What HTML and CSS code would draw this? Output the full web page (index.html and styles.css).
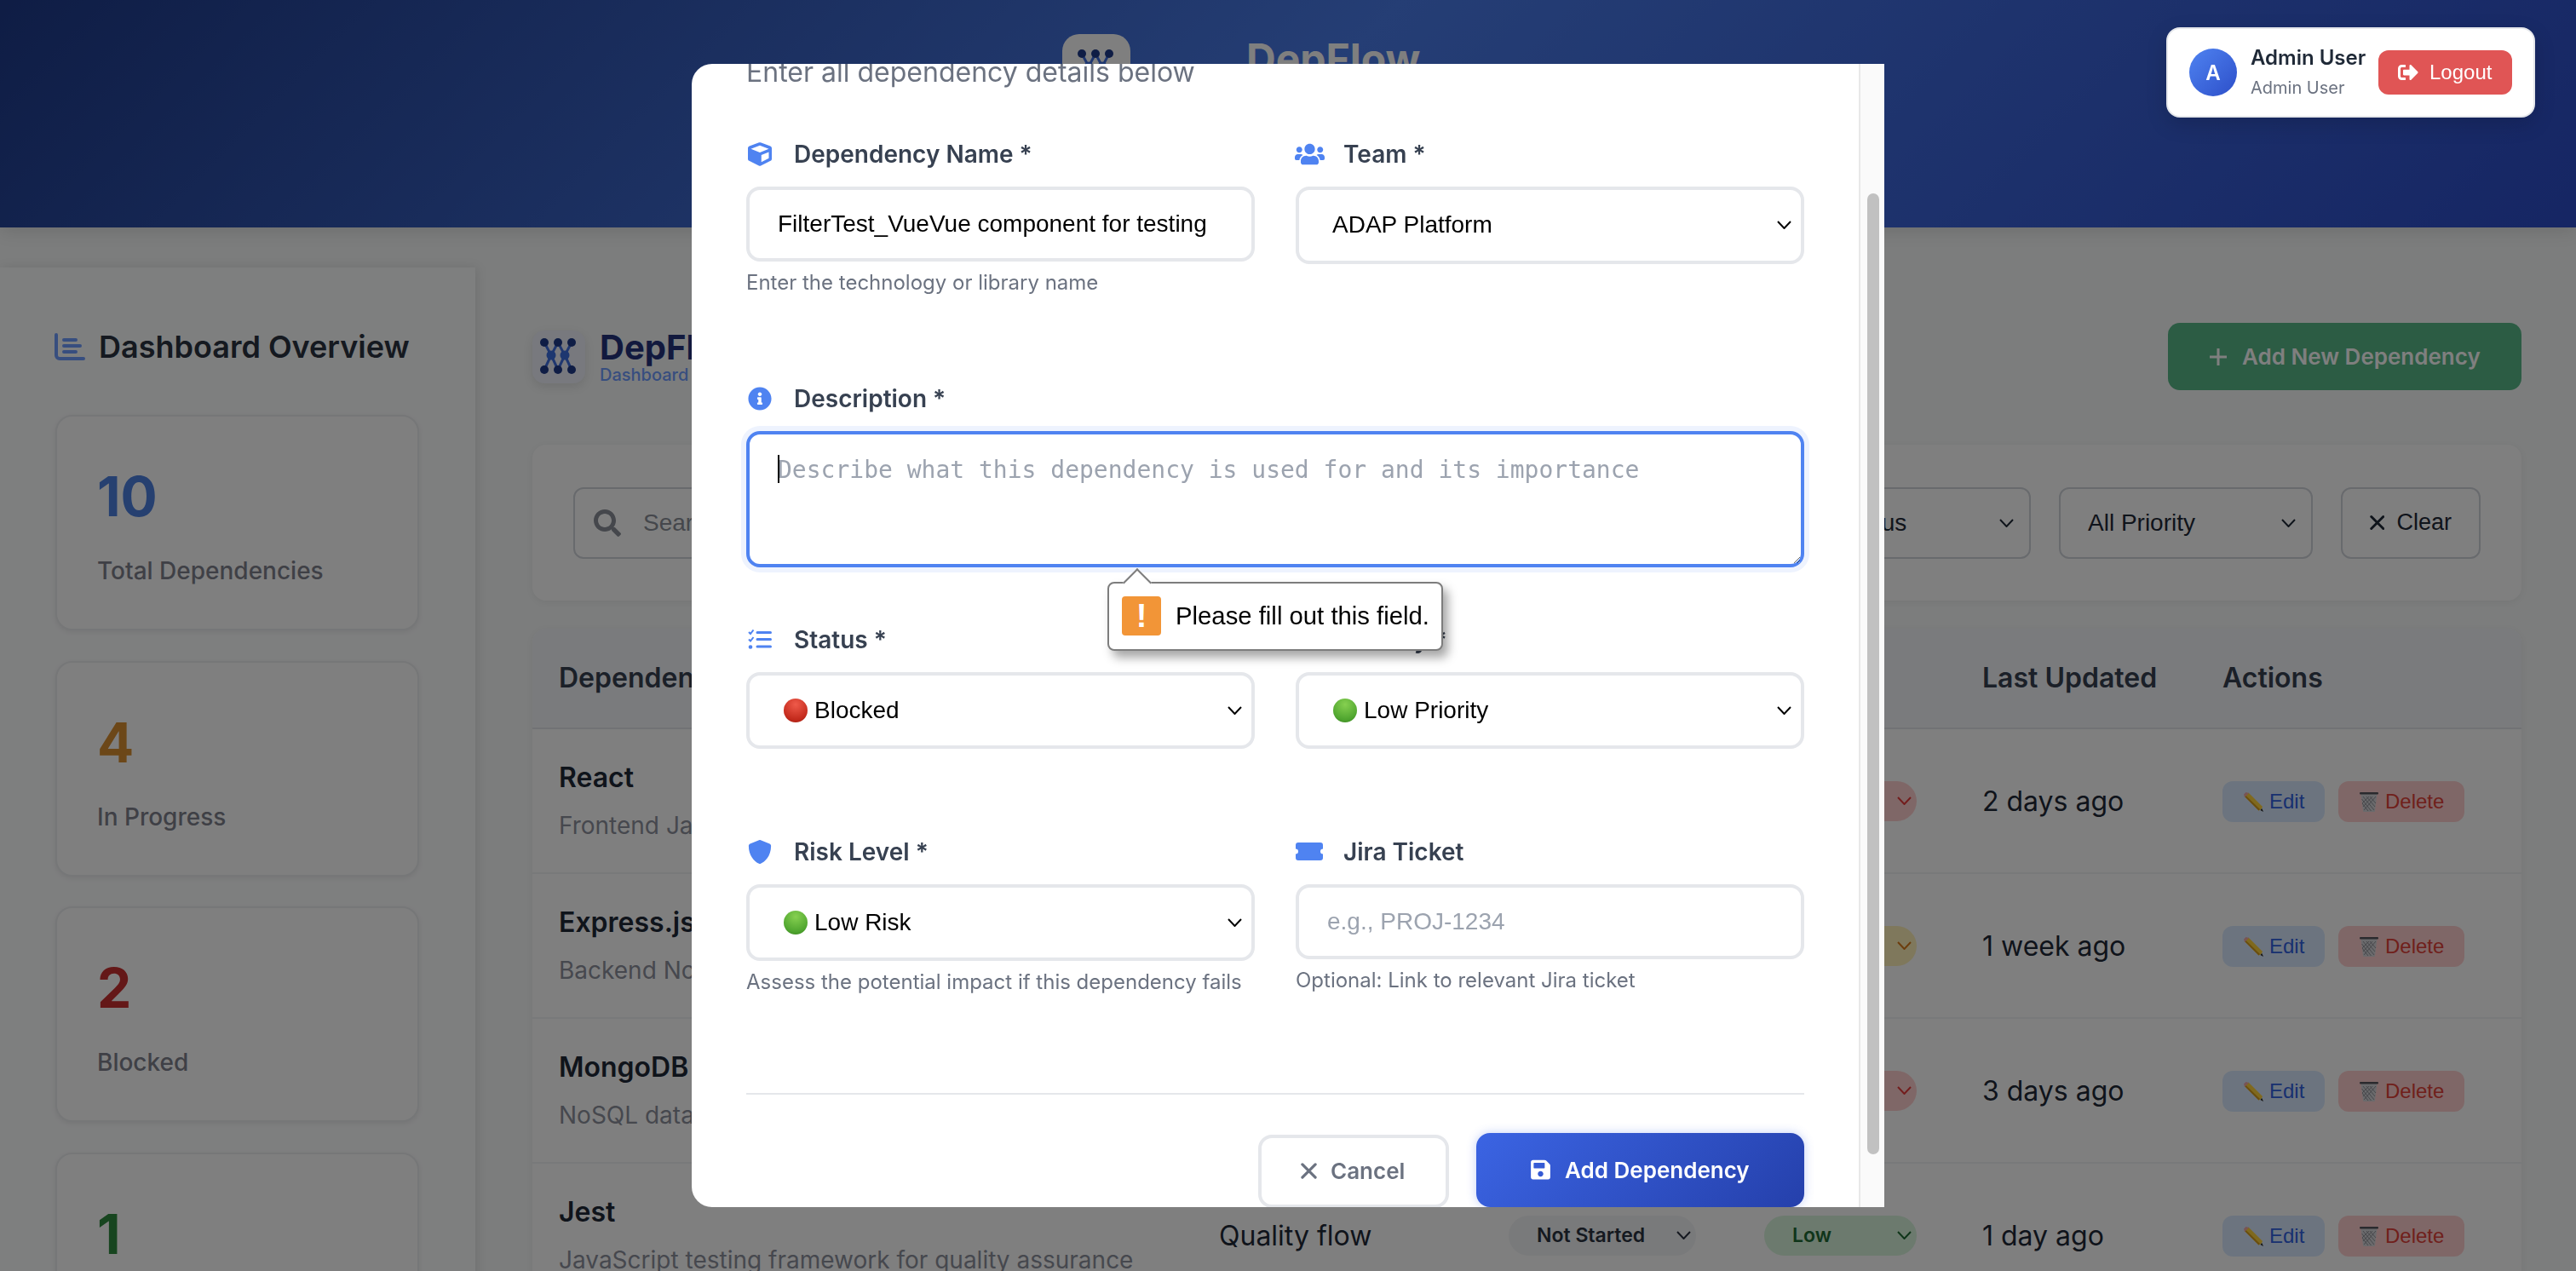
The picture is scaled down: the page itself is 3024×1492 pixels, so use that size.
FILE: index.html
```html
<!DOCTYPE html>
<html lang="en">
<head>
  <meta charset="UTF-8">
  <meta name="viewport" content="width=device-width, initial-scale=1.0">
  <title>DepFlow</title>
  <link rel="stylesheet" href="styles.css">
</head>
<body>
  <svg class="sprite" aria-hidden="true">
    <symbol id="i-logo" viewBox="0 0 60 60">
      <g class="logo-lines">
        <path d="M13 13L21 28L13 45M29 13L21 28L29 45M29 13L37 28L29 45M45 13L37 28L45 45"/>
      </g>
      <circle class="logo-dark" cx="13" cy="13" r="5"/><circle class="logo-dark" cx="29" cy="13" r="5"/><circle class="logo-dark" cx="45" cy="13" r="5"/>
      <circle class="logo-mid" cx="21" cy="28" r="5.5"/><circle class="logo-mid" cx="37" cy="28" r="5.5"/>
      <circle class="logo-dark" cx="13" cy="45" r="5"/><circle class="logo-dark" cx="29" cy="45" r="5"/><circle class="logo-dark" cx="45" cy="45" r="5"/>
    </symbol>
    <symbol id="i-chevron" viewBox="0 0 17 10"><path d="M1 1l7.5 8L16 1" fill="none" stroke="currentColor" stroke-width="2"/></symbol>
    <symbol id="i-x" viewBox="0 0 20 20"><path d="M2 2l16 16M18 2L2 18" fill="none" stroke="currentColor" stroke-width="3.4" stroke-linecap="round"/></symbol>
    <symbol id="i-plus" viewBox="0 0 22 22"><path d="M11 1v20M1 11h20" fill="none" stroke="currentColor" stroke-width="3"/></symbol>
    <symbol id="i-chart" viewBox="0 0 36 32"><path fill="currentColor" d="M0 2a2 2 0 0 1 4 0v24a2 2 0 0 0 2 2h28a2 2 0 0 1 0 4H6a6 6 0 0 1-6-6zM11 6h14a2 2 0 0 1 0 4H11a2 2 0 0 1 0-4zM11 13h19a2 2 0 0 1 0 4H11a2 2 0 0 1 0-4zM11 20h14a2 2 0 0 1 0 4H11a2 2 0 0 1 0-4z"/></symbol>
    <symbol id="i-search" viewBox="0 0 512 512"><path fill="currentColor" d="M505 442.7L405.3 343c-4.5-4.5-10.6-7-17-7H372c27.6-35.3 44-79.7 44-128C416 93.1 322.9 0 208 0S0 93.1 0 208s93.1 208 208 208c48.3 0 92.7-16.4 128-44v16.3c0 6.4 2.5 12.5 7 17l99.7 99.7c9.4 9.4 24.6 9.4 33.9 0l28.3-28.3c9.4-9.4 9.4-24.6.1-34zM208 336c-70.7 0-128-57.2-128-128 0-70.7 57.2-128 128-128 70.7 0 128 57.2 128 128 0 70.7-57.2 128-128 128z"/></symbol>
    <symbol id="i-logout" viewBox="0 0 512 512"><path fill="currentColor" d="M497 273L329 441c-15 15-41 4.5-41-17v-96H152c-13.3 0-24-10.7-24-24v-96c0-13.3 10.7-24 24-24h136V88c0-21.4 25.9-32 41-17l168 168c9.3 9.4 9.3 24.6 0 34zM192 436v-40c0-6.6-5.4-12-12-12H96c-17.7 0-32-14.3-32-32V160c0-17.7 14.3-32 32-32h84c6.6 0 12-5.4 12-12V76c0-6.6-5.4-12-12-12H96c-53 0-96 43-96 96v192c0 53 43 96 96 96h84c6.6 0 12-5.4 12-12z"/></symbol>
    <symbol id="i-cube" viewBox="0 0 512 512"><path fill="currentColor" d="M239.1 6.3l-208 78c-18.7 7-31.1 25-31.1 45v225.1c0 18.2 10.3 34.8 26.5 42.9l208 104c13.5 6.8 29.4 6.8 42.9 0l208-104c16.3-8.1 26.5-24.8 26.5-42.9V129.3c0-20-12.4-37.9-31.1-44.9l-208-78C262 2.2 250 2.2 239.1 6.3zM256 68.4l192 72v1.1l-192 78-192-78v-1.1l192-72zm32 356V275.5l160-65v133.9l-160 80z"/></symbol>
    <symbol id="i-users" viewBox="0 0 640 512"><path fill="currentColor" d="M96 224c35.3 0 64-28.7 64-64s-28.7-64-64-64-64 28.7-64 64 28.7 64 64 64zm448 0c35.3 0 64-28.7 64-64s-28.7-64-64-64-64 28.7-64 64 28.7 64 64 64zm32 32h-64c-17.6 0-33.5 7.1-45.1 18.6 40.3 22.1 68.9 62 75.1 109.4h66c17.7 0 32-14.3 32-32v-32c0-35.3-28.7-64-64-64zm-256 0c61.9 0 112-50.1 112-112S381.9 32 320 32 208 82.1 208 144s50.1 112 112 112zm76.8 32h-8.3c-20.8 10-43.9 16-68.5 16s-47.6-6-68.5-16h-8.3C179.6 288 128 339.6 128 403.2V432c0 26.5 21.5 48 48 48h288c26.5 0 48-21.5 48-48v-28.8c0-63.6-51.6-115.2-115.2-115.2zm-223.7-13.4C161.5 263.1 145.6 256 128 256H64c-35.3 0-64 28.7-64 64v32c0 17.7 14.3 32 32 32h65.9c6.3-47.4 34.9-87.3 75.2-109.4z"/></symbol>
    <symbol id="i-info" viewBox="0 0 512 512"><path fill="currentColor" d="M256 8C119 8 8 119.1 8 256c0 137 111 248 248 248s248-111 248-248C504 119.1 393 8 256 8zm0 110c23.2 0 42 18.8 42 42s-18.8 42-42 42-42-18.8-42-42 18.8-42 42-42zm56 254c0 6.6-5.4 12-12 12h-88c-6.6 0-12-5.4-12-12v-24c0-6.6 5.4-12 12-12h12v-64h-12c-6.6 0-12-5.4-12-12v-24c0-6.6 5.4-12 12-12h64c6.6 0 12 5.4 12 12v100h12c6.6 0 12 5.4 12 12v24z"/></symbol>
    <symbol id="i-tasks" viewBox="0 0 28 23"><path fill="none" stroke="currentColor" stroke-width="2" d="M1 3l2 2 3.5-4.5M1 11.5l2 2 3.5-4.5"/><circle cx="3" cy="20.5" r="2.3" fill="currentColor"/><path fill="none" stroke="currentColor" stroke-width="3" stroke-linecap="round" d="M11 3.5h15.5M11 11.5h15.5M11 20h15.5"/></symbol>
    <symbol id="i-shield" viewBox="0 0 512 512"><path fill="currentColor" d="M466.5 83.7l-192-80a48.15 48.15 0 0 0-36.9 0l-192 80C27.7 91.1 16 108.6 16 128c0 198.5 114.5 335.7 221.5 380.3 11.8 4.9 25.1 4.9 36.9 0C360.1 472.6 496 349.3 496 128c0-19.4-11.7-36.9-29.5-44.3z"/></symbol>
    <symbol id="i-ticket" viewBox="0 0 32 21"><path fill="currentColor" d="M3 0h26a3 3 0 0 1 3 3v4.500a3 3 0 0 0 0 6V18a3 3 0 0 1-3 3H3a3 3 0 0 1-3-3v-4.500a3 3 0 0 0 0-6V3a3 3 0 0 1 3-3z"/></symbol>
    <symbol id="i-save" viewBox="0 0 448 512"><path fill="currentColor" d="M433.941 129.941l-83.882-83.882A48 48 0 0 0 316.118 32H48C21.49 32 0 53.49 0 80v352c0 26.51 21.49 48 48 48h352c26.51 0 48-21.49 48-48V163.882a48 48 0 0 0-14.059-33.941zM224 416c-35.346 0-64-28.654-64-64 0-35.346 28.654-64 64-64s64 28.654 64 64c0 35.346-28.654 64-64 64zm96-304.52V212c0 6.627-5.373 12-12 12H76c-6.627 0-12-5.373-12-12V108c0-6.627 5.373-12 12-12h228.52c3.183 0 6.235 1.264 8.485 3.515l3.48 3.48A11.996 11.996 0 0 1 320 111.48z"/></symbol>
    <symbol id="i-pencil" viewBox="0 0 24 24">
      <path fill="#ffd23c" d="M6.500 1.500L23 18l-1.500 3-3 1.500L2 6z"/>
      <path fill="#d39a1c" d="M3.500 5L20 21l-1.500 1.500L2 6z"/>
      <path fill="#f2a8a8" d="M1 3.500L3.500 1 7 2 2 7z"/>
      <path fill="#222" d="M20.500 22L24 24l-1.800-4z"/>
    </symbol>
    <symbol id="i-trash" viewBox="0 0 24 24">
      <path fill="#d4d4d8" d="M2.500 3h19l-2.500 20a1 1 0 0 1-1 1H6a1 1 0 0 1-1-1z"/>
      <path fill="none" stroke="#808088" stroke-width="0.8" d="M5 6l13 16M9 6l10 12M13 6l7 8M3.500 9l11 14M4 14l7 9M20 6L6 22M16 6L5 18M12 6L4 14"/>
      <rect x="1" y="1" width="22" height="2.500" rx="1" fill="#55555c"/>
    </symbol>
  </svg>

  <header class="top-bar">
    <div class="brand">
      <div class="brand-logo"><svg class="logo-svg"><use href="#i-logo"/></svg></div>
      <div class="brand-title">DepFlow</div>
    </div>
    <div class="user-card">
      <div class="avatar">A</div>
      <div class="user-info">
        <div class="user-name">Admin User</div>
        <div class="user-role">Admin User</div>
      </div>
      <button class="logout-btn"><svg class="logout-icon"><use href="#i-logout"/></svg>Logout</button>
    </div>
  </header>

  <div class="layout">
    <aside class="sidebar">
      <h2 class="sidebar-title"><svg class="chart-icon"><use href="#i-chart"/></svg>Dashboard Overview</h2>
      <div class="stats">
        <div class="stat-card"><div class="stat-num num-blue">10</div><div class="stat-label">Total Dependencies</div></div>
        <div class="stat-card"><div class="stat-num num-orange">4</div><div class="stat-label">In Progress</div></div>
        <div class="stat-card"><div class="stat-num num-red">2</div><div class="stat-label">Blocked</div></div>
        <div class="stat-card"><div class="stat-num num-green">1</div><div class="stat-label">Completed</div></div>
      </div>
    </aside>

    <main class="main">
      <div class="main-head">
        <div class="main-brand">
          <div class="main-logo"><svg class="logo-svg"><use href="#i-logo"/></svg></div>
          <div>
            <div class="main-title">DepFlow</div>
            <div class="main-sub">Dashboard</div>
          </div>
        </div>
        <button class="add-btn"><svg class="plus-icon"><use href="#i-plus"/></svg>Add New Dependency</button>
      </div>

      <div class="filters">
        <div class="search-box"><svg class="search-icon"><use href="#i-search"/></svg>Search dependencies</div>
        <div class="filter-select filter-status">All Status<svg class="chev"><use href="#i-chevron"/></svg></div>
        <div class="filter-select filter-priority">All Priority<svg class="chev"><use href="#i-chevron"/></svg></div>
        <button class="clear-btn"><svg class="clear-icon"><use href="#i-x"/></svg>Clear</button>
      </div>

      <div class="table-card">
        <table class="dep-table">
          <colgroup>
            <col class="col-name"><col class="col-flow"><col class="col-status"><col class="col-priority"><col class="col-updated"><col class="col-actions">
          </colgroup>
          <thead>
            <tr><th>Dependency</th><th>Flow</th><th>Status</th><th>Priority</th><th>Last Updated</th><th>Actions</th></tr>
          </thead>
          <tbody>
            <tr>
              <td><div class="dep-name">React</div><div class="dep-desc">Frontend JavaScript library</div></td>
              <td>Frontend flow</td>
              <td><span class="pill pill-status pill-gray">In Progress<svg class="chev"><use href="#i-chevron"/></svg></span></td>
              <td><span class="pill pill-priority pill-red">High<svg class="chev"><use href="#i-chevron"/></svg></span></td>
              <td>2 days ago</td>
              <td><div class="actions"><button class="edit-btn"><svg class="emoji"><use href="#i-pencil"/></svg>Edit</button><button class="delete-btn"><svg class="emoji"><use href="#i-trash"/></svg>Delete</button></div></td>
            </tr>
            <tr>
              <td><div class="dep-name">Express.js</div><div class="dep-desc">Backend Node.js framework</div></td>
              <td>Backend flow</td>
              <td><span class="pill pill-status pill-gray">In Progress<svg class="chev"><use href="#i-chevron"/></svg></span></td>
              <td><span class="pill pill-priority pill-yellow">Medium<svg class="chev"><use href="#i-chevron"/></svg></span></td>
              <td>1 week ago</td>
              <td><div class="actions"><button class="edit-btn"><svg class="emoji"><use href="#i-pencil"/></svg>Edit</button><button class="delete-btn"><svg class="emoji"><use href="#i-trash"/></svg>Delete</button></div></td>
            </tr>
            <tr>
              <td><div class="dep-name">MongoDB</div><div class="dep-desc">NoSQL database</div></td>
              <td>Data flow</td>
              <td><span class="pill pill-status pill-gray">Blocked<svg class="chev"><use href="#i-chevron"/></svg></span></td>
              <td><span class="pill pill-priority pill-red">High<svg class="chev"><use href="#i-chevron"/></svg></span></td>
              <td>3 days ago</td>
              <td><div class="actions"><button class="edit-btn"><svg class="emoji"><use href="#i-pencil"/></svg>Edit</button><button class="delete-btn"><svg class="emoji"><use href="#i-trash"/></svg>Delete</button></div></td>
            </tr>
            <tr>
              <td><div class="dep-name">Jest</div><div class="dep-desc">JavaScript testing framework for quality assurance</div></td>
              <td>Quality flow</td>
              <td><span class="pill pill-status pill-gray">Not Started<svg class="chev"><use href="#i-chevron"/></svg></span></td>
              <td><span class="pill pill-priority pill-green">Low<svg class="chev"><use href="#i-chevron"/></svg></span></td>
              <td>1 day ago</td>
              <td><div class="actions"><button class="edit-btn"><svg class="emoji"><use href="#i-pencil"/></svg>Edit</button><button class="delete-btn"><svg class="emoji"><use href="#i-trash"/></svg>Delete</button></div></td>
            </tr>
          </tbody>
        </table>
      </div>
    </main>
  </div>

  <div class="overlay">
    <div class="modal">
      <div class="modal-body">
        <p class="modal-sub">Enter all dependency details below</p>

        <div class="form-row">
          <div class="form-group">
            <label class="form-label"><span class="label-icon"><svg class="ico-cube"><use href="#i-cube"/></svg></span>Dependency Name *</label>
            <input class="form-input" type="text" value="FilterTest_VueVue component for testing">
            <div class="hint">Enter the technology or library name</div>
          </div>
          <div class="form-group">
            <label class="form-label"><span class="label-icon"><svg class="ico-users"><use href="#i-users"/></svg></span>Team *</label>
            <div class="select">ADAP Platform<svg class="chev"><use href="#i-chevron"/></svg></div>
          </div>
        </div>

        <div class="form-group desc-group">
          <label class="form-label"><span class="label-icon"><svg class="ico-info"><use href="#i-info"/></svg></span>Description *</label>
          <div class="desc-wrap">
            <textarea class="form-textarea" placeholder="Describe what this dependency is used for and its importance"></textarea>
            <span class="caret"></span>
            <div class="tooltip">
              <span class="tooltip-icon">!</span>
              <span>Please fill out this field.</span>
            </div>
          </div>
        </div>

        <div class="form-row row-selects">
          <div class="form-group">
            <label class="form-label"><span class="label-icon"><svg class="ico-tasks"><use href="#i-tasks"/></svg></span>Status *</label>
            <div class="select select-emoji"><span class="dot dot-red"></span>Blocked<svg class="chev"><use href="#i-chevron"/></svg></div>
          </div>
          <div class="form-group">
            <label class="form-label"><span class="label-icon"></span>Priority *</label>
            <div class="select select-emoji"><span class="dot dot-green"></span>Low Priority<svg class="chev"><use href="#i-chevron"/></svg></div>
          </div>
        </div>

        <div class="form-row row-last">
          <div class="form-group">
            <label class="form-label"><span class="label-icon"><svg class="ico-shield"><use href="#i-shield"/></svg></span>Risk Level *</label>
            <div class="select select-emoji"><span class="dot dot-green"></span>Low Risk<svg class="chev"><use href="#i-chevron"/></svg></div>
            <div class="hint">Assess the potential impact if this dependency fails</div>
          </div>
          <div class="form-group">
            <label class="form-label"><span class="label-icon"><svg class="ico-ticket"><use href="#i-ticket"/></svg></span>Jira Ticket</label>
            <input class="form-input" type="text" placeholder="e.g., PROJ-1234">
            <div class="hint">Optional: Link to relevant Jira ticket</div>
          </div>
        </div>

        <div class="modal-footer">
          <button class="cancel-btn"><svg class="cancel-icon"><use href="#i-x"/></svg>Cancel</button>
          <button class="submit-btn"><svg class="save-icon"><use href="#i-save"/></svg>Add Dependency</button>
        </div>
      </div>
      <div class="scroll-track"><div class="scroll-thumb"></div></div>
    </div>
  </div>
</body>
</html>
```

FILE: styles.css
```css
* {
  box-sizing: border-box;
}

html, body {
  height: 100%;
}

body {
  margin: 0;
  overflow: hidden;
  font-family: Inter, "Liberation Sans", sans-serif;
  background-color: #f8fafa;
  color: #1f2937;
}

button {
  font-family: inherit;
  border: none;
  cursor: pointer;
  white-space: nowrap;
}

.sprite {
  display: none;
}

/* top bar */
.top-bar {
  display: flex;
  align-items: flex-start;
  height: 267px;
  padding: 40px 49px 0 1247px;
  background: linear-gradient(135deg, #1e3a8a 0%, #4a7cea 50%, #2c4cc8 100%);
  box-shadow: 0 4px 20px rgba(0, 0, 0, 0.12);
}

.brand {
  display: flex;
  align-items: flex-start;
  gap: 136px;
}

.brand-logo {
  display: flex;
  align-items: center;
  justify-content: center;
  width: 80px;
  height: 80px;
  background-color: #fff;
  border-radius: 20px;
}

.brand-title {
  font-size: 48px;
  line-height: 58px;
  font-weight: 700;
  color: #fff;
}

.logo-svg {
  width: 60px;
  height: 60px;
}

.logo-lines path {
  fill: none;
  stroke: #3f6fe0;
  stroke-width: 3;
}

.logo-dark {
  fill: #1e3a8a;
}

.logo-mid {
  fill: #3b6fe0;
}

.user-card {
  position: relative;
  z-index: 1001;
  display: flex;
  align-items: center;
  flex: none;
  width: 433px;
  height: 106px;
  margin: -8px -1px 0 auto;
  padding: 0 25px 0 25px;
  background-color: #fff;
  border: 2px solid #e5e7eb;
  border-radius: 16px;
  box-shadow: 0 8px 24px rgba(0, 0, 0, 0.15);
}

.avatar {
  display: flex;
  align-items: center;
  justify-content: center;
  flex: none;
  width: 56px;
  height: 56px;
  margin-right: 16px;
  border-radius: 50%;
  background: linear-gradient(135deg, #4f83f1, #2d4fc9);
  color: #fff;
  font-size: 24px;
  font-weight: 600;
}

.user-info {
  flex: 1;
}

.user-name {
  margin-top: -2px;
  font-size: 24px;
  line-height: 30px;
  font-weight: 600;
  color: #1f2937;
}

.user-role {
  margin-top: 7px;
  font-size: 20px;
  line-height: 26px;
  color: #6b7280;
}

.logout-btn {
  display: flex;
  align-items: center;
  gap: 13px;
  flex: none;
  width: 157px;
  height: 52px;
  padding: 0 23px;
  background-color: #e05555;
  border-radius: 12px;
  color: #fff;
  font-family: "Liberation Sans", sans-serif;
  font-size: 24px;
}

.logout-icon {
  width: 24px;
  height: 24px;
}

/* page behind the dialog */
.layout {
  display: flex;
  padding-top: 47px;
}

.sidebar {
  flex: none;
  width: 558px;
  height: 1300px;
  padding: 69px 66px 0 65px;
  background-color: #fdfeff;
  box-shadow: 2px 0 12px rgba(0, 0, 0, 0.1);
}

.sidebar-title {
  display: flex;
  align-items: center;
  gap: 16px;
  margin: 0 0 56px -1px;
  font-size: 36px;
  line-height: 48px;
  font-weight: 600;
  color: #2a3240;
}

.chart-icon {
  width: 36px;
  height: 32px;
  color: #6f9cff;
}

.stats {
  display: flex;
  flex-direction: column;
  gap: 35.600px;
}

.stat-card {
  height: 253px;
  padding: 62px 47px 0;
  background-color: #fff;
  border: 2px solid #eceef0;
  border-radius: 20px;
  box-shadow: 0 2px 6px rgba(0, 0, 0, 0.08);
}

.stat-num {
  margin-bottom: 37px;
  font-size: 64px;
  line-height: 64px;
  font-weight: 700;
}

.num-blue {
  color: #4d80e0;
}

.num-orange {
  color: #d88f30;
}

.num-red {
  color: #c83030;
}

.num-green {
  color: #2f8a3e;
}

.stat-label {
  font-size: 28px;
  line-height: 36px;
  font-weight: 500;
  color: #7f818d;
}

.main {
  flex: 1;
  min-width: 0;
  padding: 65px 64px 0 67px;
}

.main-head {
  display: flex;
  align-items: center;
  justify-content: space-between;
}

.main-brand {
  display: flex;
  align-items: center;
  gap: 17px;
}

.main-logo {
  display: flex;
  align-items: center;
  justify-content: center;
  width: 62px;
  height: 62px;
  background-color: #f0f3fc;
  border-radius: 14px;
  box-shadow: 0 4px 12px rgba(0, 0, 0, 0.1);
}

.main-title {
  font-size: 40px;
  line-height: 44px;
  font-weight: 700;
  color: #24337c;
}

.main-sub {
  margin-top: -2px;
  font-size: 20px;
  line-height: 24px;
  font-weight: 500;
  color: #6f9cff;
}

.add-btn {
  display: flex;
  align-items: center;
  gap: 17px;
  width: 415px;
  height: 79px;
  padding: 0 48px;
  background-color: #58b888;
  border-radius: 14px;
  color: #fff;
  font-size: 26px;
  font-weight: 600;
}

.plus-icon {
  flex: none;
  width: 22px;
  height: 22px;
}

.filters {
  display: flex;
  align-items: center;
  gap: 33px;
  height: 183px;
  margin-top: 64px;
  padding: 0 48px;
  background-color: #fff;
  border-radius: 16px;
  box-shadow: 0 2px 8px rgba(0, 0, 0, 0.06);
}

.search-box, .filter-select, .clear-btn {
  display: flex;
  align-items: center;
  height: 84px;
  background-color: #fff;
  border: 2px solid #d1d5db;
  border-radius: 12px;
  font-family: "Liberation Sans", sans-serif;
  font-size: 28px;
  color: #1f2937;
}

.search-box {
  flex: 1;
  gap: 26px;
  padding-left: 22px;
  color: #8a8f98;
}

.search-icon {
  width: 32px;
  height: 32px;
  color: #8a8f98;
}

.filter-select {
  justify-content: space-between;
  width: 298px;
  padding: 0 18px 0 32px;
}

.filter-select .chev, .select .chev, .pill .chev {
  flex: none;
  width: 17px;
  height: 10px;
}

.clear-btn {
  gap: 14px;
  width: 164px;
  padding: 0 32px;
  font-size: 27px;
}

.clear-icon {
  width: 19px;
  height: 19px;
}

.table-card {
  margin-top: 33px;
  background-color: #fff;
  border-radius: 16px;
  overflow: hidden;
  box-shadow: 0 2px 8px rgba(0, 0, 0, 0.06);
}

.dep-table {
  width: 100%;
  table-layout: fixed;
  border-collapse: collapse;
}

.col-name { width: 775px; }
.col-flow { width: 340px; }
.col-status { width: 300px; }
.col-priority { width: 256px; }
.col-updated { width: 282px; }

.dep-table th {
  height: 117px;
  padding: 0 31px 2px;
  text-align: left;
  font-size: 32px;
  font-weight: 600;
  color: #374151;
  background-color: #f4f6fb;
  border-bottom: 2px solid #e2e5ea;
}

.dep-table td {
  height: 170px;
  padding: 0 31px;
  font-size: 32px;
  color: #1f2937;
  border-bottom: 2px solid #f1f2f4;
}

.dep-name {
  font-size: 32px;
  line-height: 40px;
  font-weight: 600;
  color: #1f2937;
}

.dep-desc {
  margin-top: 17px;
  font-size: 28px;
  line-height: 38px;
  color: #8d909c;
}

.pill {
  display: inline-flex;
  align-items: center;
  justify-content: space-between;
  height: 47px;
  padding: 0 6px 0 33px;
  border-radius: 24px;
  font-size: 23px;
  font-weight: 600;
  vertical-align: middle;
}

.pill-status {
  width: 220px;
}

.pill-priority {
  width: 179px;
}

.pill-gray {
  background-color: #f3f4f6;
  color: #2a3240;
}

.pill-red {
  background-color: #ffcfcf;
  color: #e63b3b;
}

.pill-yellow {
  background-color: #fff0b8;
  color: #d97a1a;
}

.pill-green {
  background-color: #d8f5dc;
  color: #1f6b34;
}

.actions {
  display: flex;
  gap: 16px;
  margin-top: 2px;
}

.edit-btn, .delete-btn {
  display: flex;
  align-items: center;
  gap: 7px;
  height: 48px;
  padding: 0 0 0 24px;
  border-radius: 12px;
  font-family: "Liberation Sans", sans-serif;
  font-size: 24px;
}

.edit-btn {
  width: 120px;
  background-color: #d9e9ff;
  color: #3060e0;
}

.delete-btn {
  width: 148px;
  background-color: #ffcfcf;
  color: #e04038;
}

.emoji {
  flex: none;
  width: 24px;
  height: 24px;
}

/* dialog */
.overlay {
  position: fixed;
  top: 0;
  left: 0;
  right: 0;
  bottom: 0;
  z-index: 1000;
  display: flex;
  align-items: center;
  justify-content: center;
  background-color: rgba(0, 0, 0, 0.5);
}

.modal {
  display: flex;
  width: 1400px;
  height: 90vh;
  overflow: hidden;
  background-color: #fff;
  border-radius: 24px 0 0 24px;
}

.modal-body {
  flex: 1;
  min-width: 0;
  padding: 0 64px;
}

.scroll-track {
  flex: none;
  width: 30px;
  padding: 152px 6px 0 8px;
  background-color: #fafafa;
  border-left: 2px solid #e8e8e8;
}

.scroll-thumb {
  height: 1128px;
  background-color: #c1c1c1;
  border-radius: 8px;
}

.modal-sub {
  margin: -11px 0 58px;
  font-size: 32px;
  line-height: 42px;
  color: #6b7280;
}

.form-row {
  display: grid;
  grid-template-columns: 1fr 1fr;
  gap: 48px;
  align-items: start;
  margin-bottom: 101px;
}

.row-selects {
  margin-bottom: 104px;
}

.row-last {
  margin-bottom: 112px;
}

.desc-group {
  margin-bottom: 68px;
}

.form-label {
  display: flex;
  align-items: center;
  height: 34px;
  margin-bottom: 21px;
  font-size: 28px;
  font-weight: 600;
  color: #374151;
}

.label-icon {
  display: flex;
  justify-content: center;
  flex: none;
  width: 32px;
  margin-right: 24px;
  color: #4f83f1;
}

.ico-cube, .ico-info, .ico-shield {
  width: 28px;
  height: 28px;
}

.ico-users {
  flex: none;
  width: 35px;
  height: 28px;
}

.ico-tasks {
  width: 28px;
  height: 23px;
}

.ico-ticket {
  width: 32px;
  height: 21px;
}

.form-input {
  display: block;
  width: 100%;
  height: 88px;
  padding: 0 33px;
  border: 4px solid #e5e7eb;
  border-radius: 16px;
  font-family: "Liberation Sans", sans-serif;
  font-size: 28px;
  color: #000;
  background-color: #fff;
  outline: none;
}

.form-input::placeholder {
  color: #9ca3af;
}

.select {
  display: flex;
  align-items: center;
  height: 91px;
  padding: 0 11px 0 39px;
  border: 4px solid #e5e7eb;
  border-radius: 16px;
  font-family: "Liberation Sans", sans-serif;
  font-size: 28px;
  color: #000;
  background-color: #fff;
}

.select .chev {
  margin-left: auto;
  color: #000;
}

.select-emoji {
  height: 90px;
  padding-left: 40px;
}

.dot {
  flex: none;
  width: 28px;
  height: 28px;
  margin-right: 8px;
  border-radius: 50%;
}

.dot-red {
  background: radial-gradient(circle at 50% 25%, #ef5a4a, #c32a1c 70%, #9a1c10);
}

.dot-green {
  background: radial-gradient(circle at 50% 25%, #86d050, #4fa52f 70%, #357d1c);
}

.hint {
  margin-top: 7px;
  font-size: 24px;
  line-height: 36px;
  color: #6b7280;
}

.desc-wrap {
  position: relative;
}

.form-textarea {
  display: block;
  width: 100%;
  height: 160px;
  padding: 25px 33px;
  border: 4px solid #4f83f1;
  border-radius: 16px;
  box-shadow: 0 0 0 6px #eef3fe;
  font-family: "DejaVu Sans Mono", monospace;
  font-size: 28px;
  line-height: 34px;
  outline: none;
  resize: vertical;
}

.form-textarea::placeholder {
  color: #9ca3af;
}

.caret {
  position: absolute;
  left: 37px;
  top: 28px;
  width: 2px;
  height: 33px;
  background-color: #000;
}

.tooltip {
  position: absolute;
  left: 424px;
  top: 177px;
  z-index: 2;
  display: flex;
  align-items: center;
  gap: 17px;
  width: 394px;
  height: 81px;
  padding-left: 15px;
  background-color: #fff;
  border: 2px solid #7d7d7d;
  border-radius: 8px;
  box-shadow: 6px 8px 12px rgba(0, 0, 0, 0.35);
  font-family: "Liberation Sans", sans-serif;
  font-size: 29.300px;
  color: #000;
}

.tooltip::before {
  content: "";
  position: absolute;
  left: 21px;
  top: -13px;
  width: 22px;
  height: 22px;
  background-color: #fff;
  border-left: 2px solid #7d7d7d;
  border-top: 2px solid #7d7d7d;
  transform: rotate(45deg);
}

.tooltip-icon {
  position: relative;
  display: flex;
  align-items: center;
  justify-content: center;
  flex: none;
  width: 46px;
  height: 46px;
  background-color: #f29537;
  border-radius: 4px;
  color: #fff;
  font-size: 38px;
  font-weight: 700;
}

.modal-footer {
  display: flex;
  align-items: flex-start;
  justify-content: flex-end;
  gap: 32px;
  padding-top: 45px;
  border-top: 2px solid #e5e7eb;
}

.cancel-btn, .submit-btn {
  display: flex;
  align-items: center;
  font-weight: 600;
  border-radius: 16px;
}

.cancel-btn {
  gap: 16px;
  width: 224px;
  height: 86px;
  margin-top: 2px;
  padding: 0 46px;
  background-color: #fff;
  border: 4px solid #e5e7eb;
  color: #6b7280;
  font-size: 26px;
}

.cancel-icon {
  flex: none;
  width: 19px;
  height: 19px;
}

.submit-btn {
  gap: 17px;
  width: 385px;
  height: 87px;
  padding: 0 64px;
  background: linear-gradient(135deg, #3b64e3, #2540ab);
  box-shadow: 0 0 12px rgba(59, 100, 227, 0.3);
  color: #fff;
  font-size: 26px;
}

.save-icon {
  flex: none;
  width: 23px;
  height: 26px;
}
```
